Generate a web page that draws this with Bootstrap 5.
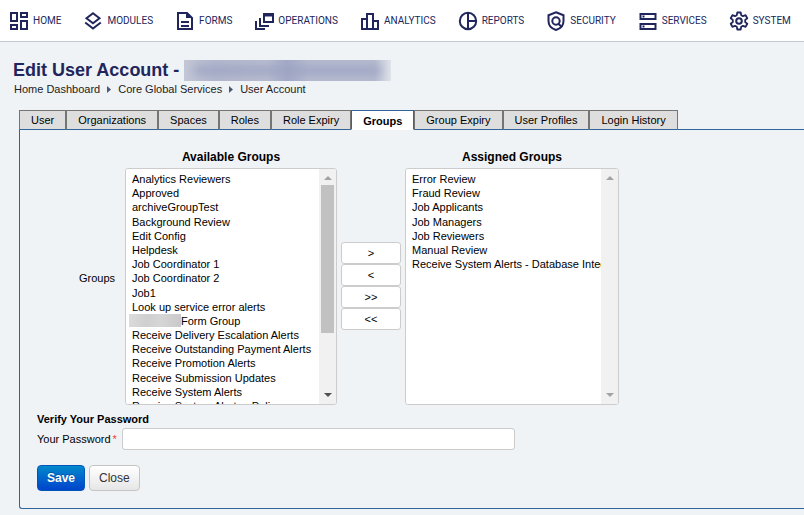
<!DOCTYPE html>
<html lang="en">
<head>
<meta charset="utf-8">
<meta name="viewport" content="width=device-width, initial-scale=1">
<title>Edit User Account</title>
<link rel="stylesheet" href="https://cdn.jsdelivr.net/npm/bootstrap@5.3.0/dist/css/bootstrap.min.css">
<style>
body{background:#f0f3f5;color:#000;font-family:"Liberation Sans",Arial,sans-serif;font-size:11px;line-height:14px;overflow-x:hidden}
.topbar{padding:0 7px;height:42px;border-bottom:1px solid #c3c8d9;gap:20px}
.topbar a{color:#20265c;font:10px/24px Roboto,sans-serif;gap:2px}
.topbar svg{width:24px;height:24px;fill:none;stroke:#20265c;stroke-width:2}
.heading{padding:17px 13px 0}
.heading h1{font-size:18px;line-height:22px;color:#20265c}
.masked{width:207px;height:21px;background:linear-gradient(90deg,#c3c7d6,#b3b8cd 15%,#b9bdd0 40%,#a3a9c7 50%,#b6bbcf 60%,#b6bbcf 92%,#dfe3ea);overflow:hidden}
.masked i{display:block;height:7px;margin:7px 10px;background:#9aa1c1;filter:blur(5px)}
.crumbs{margin-top:1px;padding-left:1px}
.crumbs a,.crumbs span{color:#222}
.crumbs svg{width:4px;height:7px;fill:#4b5878;margin:0 7px}
.tabset{padding:14px 0 0 19px}
.tabset .nav-link{height:20px;padding:0 11px;border:1px solid #757575;border-bottom-color:#2f659b;border-radius:0;background:#dedede;color:#000;font-size:11px;line-height:19px}
.tabset .nav-link.active{background:#fff;border-color:#2f659b;border-bottom-color:#fff;font-weight:bold;line-height:21px}
.panel{margin:-1px 0 0 19px;padding:20px 17px 17px;border:1px solid #2f659b;border-right:0;border-radius:0 0 0 3px}
.picker{gap:4px}
.picker-label{width:78px;margin-right:6px}
.listcol{flex:0 1 212px;min-width:0}
.listcol.wide{flex-basis:214px}
.listcol>label{font-size:12px;line-height:14px;margin-bottom:4px}
.listbox{height:237px;border:1px solid #ccc;border-radius:3px;overflow:hidden;background:#fff}
.listbox select{appearance:none;border:0;outline:0;background:#fff;color:#000;font-size:11px;padding:4px 0 0 4px;min-width:0;scrollbar-width:none;overflow:hidden}
.listbox select::-webkit-scrollbar{display:none}
.listbox option{box-sizing:content-box}
.listbox .masked-start{padding-left:51px}
.rail{width:17px;background:#f1f1f1;padding:7px 2px}
.rail svg{width:8px;height:4px;fill:#a3a3a3}
.rail svg.on{fill:#505050}
.thumb{width:13px;height:148px;background:#c1c1c1;margin-top:5px}
.patch{left:3px;top:145px;width:52px;height:13px;background:linear-gradient(100deg,#dcdcdc,#cfcfcf 35%,#d6d6d6 60%,#c8c8c8)}
.movers{width:60px;padding-top:16px}
.movers button{height:22px;border:1px solid #ccc;border-radius:3px;background:#fff;color:#000;font-size:11px;line-height:18px;padding:0}
.verify{margin-top:7px}
.pwd{margin-top:2px;gap:5px}
.pwd .form-control{flex:0 1 393px;height:22px;border:1px solid #ccc;border-radius:3px;padding:0 6px;font-size:11px}
.req{color:#f33;margin-left:2px}
.actions{margin-top:15px;gap:4px}
.actions .btn{height:26px;padding:0 9px;border-radius:4px;font-size:12px;line-height:24px}
.save{background:linear-gradient(#08c,#04c);border-color:#0055b8;color:#fff;font-weight:bold;text-shadow:0 -1px 0 rgba(0,0,0,.25)}
.close-btn{background:linear-gradient(#fff,#e6e6e6);border-color:#c5c5c5;color:#333}
</style>
<script src="https://cdn.jsdelivr.net/npm/bootstrap@5.3.0/dist/js/bootstrap.bundle.min.js"></script>
</head>
<body>
<nav class="topbar d-flex align-items-center bg-white text-nowrap" aria-label="Main">
<a href="#" class="d-flex align-items-center text-decoration-none"><svg viewBox="0 0 24 24"><path d="M4 4h6v8H4zM14 4h6v4h-6zM4 16h6v4H4zM14 12h6v8h-6z"/></svg>HOME</a>
<a href="#" class="d-flex align-items-center text-decoration-none"><svg viewBox="0 0 24 24"><path d="M12 4.200l6.500 5-6.500 5-6.500-5zM4.200 13.500l7.800 6 7.800-6"/></svg>MODULES</a>
<a href="#" class="d-flex align-items-center text-decoration-none"><svg viewBox="0 0 24 24"><path d="M5 4h9l5 5v11H5zM8 13h8M8 17h8"/><path d="M13 4h2l4 5h-6z" fill="#20265c" stroke="none"/></svg>FORMS</a>
<a href="#" class="d-flex align-items-center text-decoration-none"><svg viewBox="0 0 24 24"><path d="M12 5h9v8h-9zM12 6.500h9M8 9v8h9M4 12v8h9"/></svg>OPERATIONS</a>
<a href="#" class="d-flex align-items-center text-decoration-none"><svg viewBox="0 0 24 24"><path d="M4 10h5v10H4zM9 5h6v15H9zM15 12h5v8h-5z"/></svg>ANALYTICS</a>
<a href="#" class="d-flex align-items-center text-decoration-none"><svg viewBox="0 0 24 24"><circle cx="12" cy="12" r="8.200"/><path d="M12 4v16M12 12h8"/></svg>REPORTS</a>
<a href="#" class="d-flex align-items-center text-decoration-none"><svg viewBox="0 0 24 24"><path d="M12 3.300l7.500 3V12c0 4.500-3 7.700-7.500 9-4.500-1.300-7.500-4.500-7.500-9V6.300z"/><circle cx="12" cy="12" r="3.700"/><path d="M14 14.500l4 3.500"/></svg>SECURITY</a>
<a href="#" class="d-flex align-items-center text-decoration-none"><svg viewBox="0 0 24 24"><path d="M4.500 5h15v5h-15zM4.500 15h15v5h-15zM6.500 7.500h2M6.500 17.500h2"/></svg>SERVICES</a>
<a href="#" class="d-flex align-items-center text-decoration-none"><svg viewBox="0 0 24 24"><path d="M10.300 3.500h3.400l.5 2.700 1.800 1 2.600-1 1.700 3-2.100 1.700v2.200l2.100 1.700-1.700 3-2.600-1-1.800 1-.5 2.700h-3.400l-.5-2.700-1.800-1-2.600 1-1.700-3 2.100-1.700v-2.200L3.700 9.200l1.700-3 2.600 1 1.800-1z" stroke-linejoin="round" stroke-width="1.800"/><circle cx="12" cy="12" r="2.800"/></svg>SYSTEM</a>
</nav>

<header class="heading">
<h1 class="d-flex align-items-center fw-bold mb-0 text-nowrap">Edit User Account -&nbsp;<span class="masked"><i></i></span></h1>
<nav class="crumbs d-flex align-items-center" aria-label="Breadcrumb">
<a href="#" class="text-decoration-none">Home Dashboard</a><svg viewBox="0 0 4 7"><path d="M0 0l4 3.500L0 7z"/></svg>
<a href="#" class="text-decoration-none">Core Global Services</a><svg viewBox="0 0 4 7"><path d="M0 0l4 3.500L0 7z"/></svg>
<span>User Account</span>
</nav>
</header>

<ul class="tabset nav flex-nowrap text-nowrap">
<li><a class="nav-link" href="#">User</a></li>
<li><a class="nav-link" href="#">Organizations</a></li>
<li><a class="nav-link" href="#">Spaces</a></li>
<li><a class="nav-link" href="#">Roles</a></li>
<li><a class="nav-link" href="#">Role Expiry</a></li>
<li class="position-relative z-1"><a class="nav-link active" href="#" aria-current="page">Groups</a></li>
<li><a class="nav-link" href="#">Group Expiry</a></li>
<li><a class="nav-link" href="#">User Profiles</a></li>
<li><a class="nav-link" href="#">Login History</a></li>
</ul>

<form class="panel">
<div class="picker d-flex">
<div class="picker-label align-self-center text-end">Groups</div>
<div class="listcol">
<label for="available" class="d-block text-center fw-bold">Available Groups</label>
<div class="listbox d-flex position-relative">
<select id="available" class="flex-fill" multiple>
<option>Analytics Reviewers</option><option>Approved</option><option>archiveGroupTest</option><option>Background Review</option><option>Edit Config</option><option>Helpdesk</option><option>Job Coordinator 1</option><option>Job Coordinator 2</option><option>Job1</option><option>Look up service error alerts</option><option class="masked-start">Form Group</option><option>Receive Delivery Escalation Alerts</option><option>Receive Outstanding Payment Alerts</option><option>Receive Promotion Alerts</option><option>Receive Submission Updates</option><option>Receive System Alerts</option><option>Receive System Alerts - Policy</option>
</select>
<span class="patch position-absolute"></span>
<div class="rail d-flex flex-column align-items-center flex-shrink-0" aria-hidden="true"><svg viewBox="0 0 8 4"><path d="M0 4l4-4 4 4z"/></svg><div class="thumb"></div><svg class="on mt-auto" viewBox="0 0 8 4"><path d="M0 0l4 4 4-4z"/></svg></div>
</div>
</div>
<div class="movers d-flex flex-column align-self-center flex-shrink-0">
<button type="button">&gt;</button><button type="button">&lt;</button><button type="button">&gt;&gt;</button><button type="button">&lt;&lt;</button>
</div>
<div class="listcol wide">
<label for="assigned" class="d-block text-center fw-bold">Assigned Groups</label>
<div class="listbox d-flex">
<select id="assigned" class="flex-fill" multiple>
<option>Error Review</option><option>Fraud Review</option><option>Job Applicants</option><option>Job Managers</option><option>Job Reviewers</option><option>Manual Review</option><option>Receive System Alerts - Database Integrity</option>
</select>
<div class="rail d-flex flex-column align-items-center flex-shrink-0" aria-hidden="true"><svg viewBox="0 0 8 4"><path d="M0 4l4-4 4 4z"/></svg><svg class="mt-auto" viewBox="0 0 8 4"><path d="M0 0l4 4 4-4z"/></svg></div>
</div>
</div>
</div>
<div class="verify fw-bold">Verify Your Password</div>
<div class="pwd d-flex align-items-center">
<label for="password" class="text-nowrap">Your Password<span class="req">*</span></label>
<input id="password" type="password" class="form-control">
</div>
<div class="actions d-flex">
<button type="submit" class="btn save">Save</button>
<button type="button" class="btn close-btn">Close</button>
</div>
</form>
</body>
</html>
